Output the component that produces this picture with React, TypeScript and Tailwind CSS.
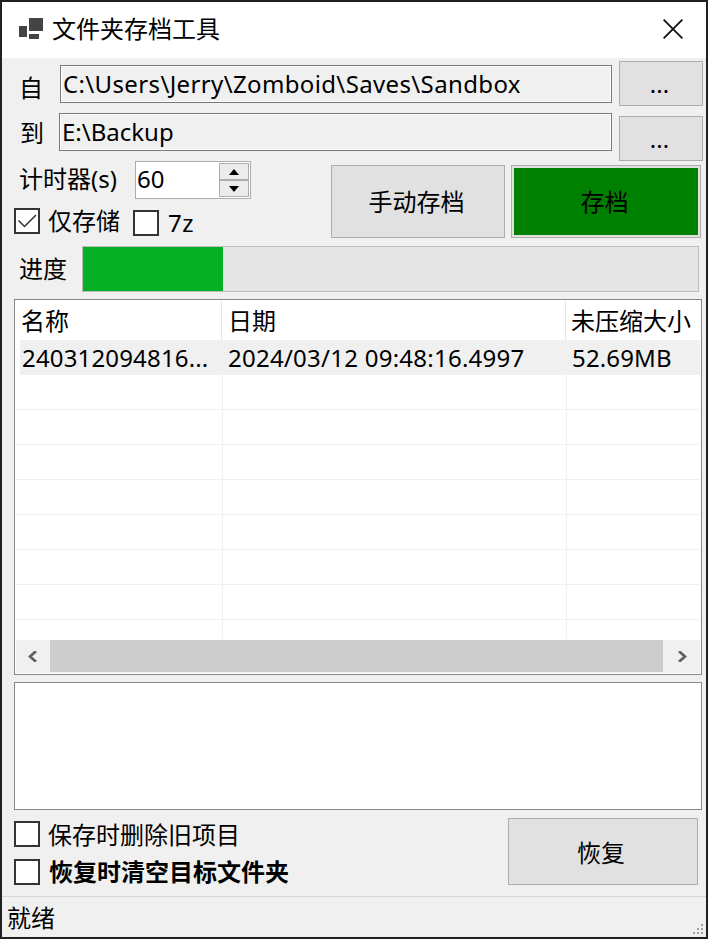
import type { ReactNode } from "react";

function CheckBox({ checked = false, className = "" }: { checked?: boolean; className?: string }) {
  return (
    <span className={`block size-[26px] shrink-0 border-2 border-[#333333] bg-white ${className}`}>
      {checked && (
        <svg viewBox="0 0 22 22" className="block size-[22px]" fill="none" stroke="#333333" strokeWidth="1.5">
          <path d="M2.5 10.5 8.5 16.5 20 5" />
        </svg>
      )}
    </span>
  );
}

function PushButton({ children, className = "" }: { children: ReactNode; className?: string }) {
  return (
    <button className={`flex shrink-0 items-center justify-center border border-[#adadad] bg-[#e1e1e1] ${className}`}>
      {children}
    </button>
  );
}

function PathField({ children, className = "" }: { children: ReactNode; className?: string }) {
  return (
    <div className={`h-[38px] border border-[#7a7a7a] bg-[#f0f0f0] pl-[2px] leading-[36px] shadow-[inset_0_0_0_1px_#fff] ${className}`}>
      {children}
    </div>
  );
}

function Spinner({ up = false }: { up?: boolean }) {
  return (
    <span className="flex h-[17px] w-[30px] items-center justify-center border border-[#adadad] bg-[#ececec]">
      <svg viewBox="0 0 10 6" className="h-[6px] w-[10px]">
        <path d={up ? "M0 6 5 0 10 6Z" : "M0 0 5 6 10 0Z"} />
      </svg>
    </span>
  );
}

const emptyRows = [0, 1, 2, 3, 4, 5, 6];

export default function App() {
  return (
    <div className="h-[939px] w-[708px] overflow-hidden bg-[#202022] p-[2px] font-['Noto_Sans','Noto_Sans_CJK_SC',sans-serif] text-[24px] leading-[34px] whitespace-nowrap text-black">
      <div className="flex h-[935px] w-[704px] flex-col bg-[#f0f0f0]">
        <header className="flex h-14 shrink-0 items-center bg-white pb-[2px] pl-[16px]">
          <svg viewBox="0 0 26 24" className="h-6 w-[26px] shrink-0" fill="#444444">
            <path d="M11 1h14v13H11zM1 9h8v11H1zM11 17h10v5H11z" />
          </svg>
          <h1 className="ml-[8px]">文件夹存档工具</h1>
          <svg viewBox="0 0 20 20" className="mr-[23px] ml-auto size-5" fill="none" stroke="#111" strokeWidth="1.8">
            <path d="M.6.6 19.4 19.4M19.4.6.6 19.4" />
          </svg>
        </header>

        <section className="flex h-[103px] shrink-0">
          <div className="w-[610px] pt-[7px]">
            <div className="flex h-12">
              <label className="w-[58px] shrink-0 pt-[6px] pl-[17px]">自</label>
              <PathField className="w-[552px]">
                <span className="tracking-[0.36px]">C:\Users\Jerry\Zomboid\Saves\Sandbox</span>
              </PathField>
            </div>
            <div className="flex h-12">
              <label className="w-[57px] shrink-0 pt-[3px] pl-[18px]">到</label>
              <PathField className="w-[553px]">E:\Backup</PathField>
            </div>
          </div>
          <div className="flex flex-col gap-[10px] pt-[3px] pl-[7px]">
            <PushButton className="h-[45px] w-[84px] pr-[3px]">...</PushButton>
            <PushButton className="h-[45px] w-[84px] pr-[3px]">...</PushButton>
          </div>
        </section>

        <section className="flex h-[85px] shrink-0">
          <div className="w-[329px]">
            <div className="flex h-[47px]">
              <label className="w-[133px] shrink-0 pt-px pl-[17px]">计时器(s)</label>
              <div className="flex h-[38px] w-[116px] justify-between border border-[#adadad] bg-white p-px">
                <span className="leading-[32px]">60</span>
                <span className="flex flex-col">
                  <Spinner up />
                  <Spinner />
                </span>
              </div>
            </div>
            <div className="flex h-[38px] pl-[12px]">
              <CheckBox checked />
              <span className="-mt-[4px] ml-[8px] w-[85px]">仅存储</span>
              <CheckBox className="mt-[2px]" />
              <span className="-mt-[2px] ml-[9px] tracking-[0.4px]">7z</span>
            </div>
          </div>
          <div className="flex gap-[6px] pt-[4px]">
            <PushButton className="h-[73px] w-[174px] pr-[3px]">手动存档</PushButton>
            <PushButton className="h-[73px] w-[190px] p-[2px]">
              <span className="flex size-full items-center justify-center bg-[#008000] pr-[3px]">存档</span>
            </PushButton>
          </div>
        </section>

        <section className="flex h-[53px] shrink-0">
          <label className="w-[80px] shrink-0 pt-[6px] pl-[17px]">进度</label>
          <div className="h-[46px] w-[617px] border border-[#bcbcbc] bg-[#e6e6e6]">
            <div className="h-full w-[140px] bg-[#06b025]" />
          </div>
        </section>

        <section className="ml-[12px] flex h-[376px] w-[688px] shrink-0 flex-col border border-[#828790] bg-white p-px">
          <div className="flex h-[39px] shrink-0 leading-[39px]">
            <span className="w-[206px] border-r border-[#e5e5e5] pl-[5px]">名称</span>
            <span className="w-[344px] border-r border-[#e5e5e5] pl-[6px]">日期</span>
            <span className="pl-[5px]">未压缩大小</span>
          </div>
          <div className="h-[300px] shrink-0 overflow-hidden">
            <div className="ml-[4px] flex h-[35px] bg-[#f0f0f0] leading-[35px]">
              <span className="w-[206px] pl-[2px] tracking-[0.16px]">240312094816...</span>
              <span className="w-[344px] pl-[2px] tracking-[0.25px]">2024/03/12 09:48:16.4997</span>
              <span className="pl-[2px] tracking-[0.15px]">52.69MB</span>
            </div>
            {emptyRows.map((row) => (
              <div key={row} className="flex h-[35px] border-b border-[#f0f0f0]">
                <span className="w-[207px] border-r border-[#f0f0f0]" />
                <span className="w-[344px] border-r border-[#f0f0f0]" />
              </div>
            ))}
            <div className="flex h-[19px]">
              <span className="w-[207px] border-r border-[#f0f0f0]" />
              <span className="w-[344px] border-r border-[#f0f0f0]" />
            </div>
          </div>
          <div className="flex h-[33px] shrink-0 bg-[#f0f0f0]">
            <span className="flex w-[34px] items-center justify-center pr-[2px]">
              <svg viewBox="0 0 9 11" className="h-[11px] w-[9px]" fill="none" stroke="#606060" strokeWidth="2.8">
                <path d="M8 .3 2 5.5 8 10.7" />
              </svg>
            </span>
            <span className="h-8 w-[613px] bg-[#cdcdcd]" />
            <span className="flex w-[37px] items-center justify-center pl-[2px]">
              <svg viewBox="0 0 9 11" className="h-[11px] w-[9px]" fill="none" stroke="#606060" strokeWidth="2.8">
                <path d="M1 .3 7 5.5 1 10.7" />
              </svg>
            </span>
          </div>
        </section>

        <section className="mt-[7px] ml-[12px] h-[128px] w-[688px] shrink-0 border border-[#828790] bg-white" />

        <section className="flex h-[86px] shrink-0 pt-[8px] pl-[12px]">
          <div className="w-[494px]">
            <div className="flex h-[38px] pt-[3px]">
              <CheckBox />
              <span className="-mt-[3px] ml-[8px]">保存时删除旧项目</span>
            </div>
            <div className="flex h-[38px] pt-[3px]">
              <CheckBox />
              <span className="-mt-[4px] ml-[9px] font-bold">恢复时清空目标文件夹</span>
            </div>
          </div>
          <PushButton className="h-[67px] w-[190px] pt-[2px] pr-[4px]">恢复</PushButton>
        </section>

        <footer className="flex h-[41px] shrink-0 items-end justify-between border-t border-[#d7d7d7] pr-[3px] pb-[3px] pl-[5px]">
          <span className="-mb-px">就绪</span>
          <svg viewBox="0 0 10 10" className="size-[10px]" fill="#a0a0a0" shapeRendering="crispEdges">
            <path d="M8 0h2v2h-2zM4 4h2v2h-2zM8 4h2v2h-2zM0 8h2v2h-2zM4 8h2v2h-2zM8 8h2v2h-2z" />
          </svg>
        </footer>
      </div>
    </div>
  );
}
